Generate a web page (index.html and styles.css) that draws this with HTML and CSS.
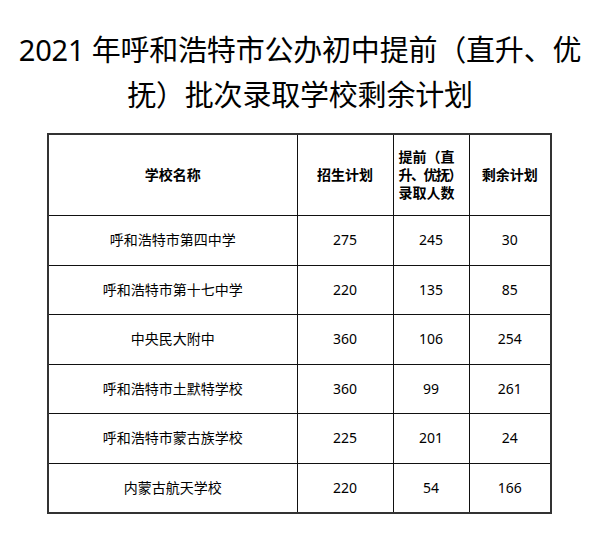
FILE: index.html
```html
<!DOCTYPE html>
<html lang="zh-CN">
<head>
<meta charset="utf-8">
<link rel="stylesheet" href="styles.css">
</head>
<body>
<h1 class="title">2021 年呼和浩特市公办初中提前（直升、优<br>抚）批次录取学校剩余计划</h1>
<table class="plan">
  <colgroup>
    <col class="c-name"><col class="c-plan"><col class="c-adm"><col class="c-rest">
  </colgroup>
  <thead>
    <tr>
      <th>学校名称</th>
      <th>招生计划</th>
      <th class="narrow">提前（直<br><span class="tight">升、优抚）</span><br>录取人数</th>
      <th>剩余计划</th>
    </tr>
  </thead>
  <tbody>
    <tr><td>呼和浩特市第四中学</td><td>275</td><td>245</td><td>30</td></tr>
    <tr><td>呼和浩特市第十七中学</td><td>220</td><td>135</td><td>85</td></tr>
    <tr><td>中央民大附中</td><td>360</td><td>106</td><td>254</td></tr>
    <tr><td>呼和浩特市土默特学校</td><td>360</td><td>99</td><td>261</td></tr>
    <tr><td>呼和浩特市蒙古族学校</td><td>225</td><td>201</td><td>24</td></tr>
    <tr><td>内蒙古航天学校</td><td>220</td><td>54</td><td>166</td></tr>
  </tbody>
</table>
</body>
</html>
```
FILE: styles.css
```css
html, body {
  margin: 0;
  padding: 0;
  background: #fff;
  color: #000;
}
body {
  font-family: "Noto Sans", "Noto Sans CJK SC", sans-serif;
}
.title {
  margin: 27px 0 0;
  font-size: 29px;
  line-height: 45px;
  font-weight: 400;
  text-align: center;
  letter-spacing: -0.2px;
}
.plan {
  margin: 16px 0 0 47px;
  width: 503px;
  border-collapse: collapse;
  table-layout: fixed;
  border: 2px solid #333;
}
.c-name { width: 249px; }
.c-plan { width: 96px; }
.c-adm { width: 76px; }
.c-rest { width: 82px; }
.plan th, .plan td {
  border: 1px solid #111;
  text-align: center;
  vertical-align: middle;
  font-size: 14px;
  padding: 0 2px;
}
.plan th {
  height: 80px;
  font-weight: 700;
  line-height: 18px;
}
.plan td {
  height: 48.5px;
  line-height: 18px;
}
.plan th.narrow {
  text-align: left;
  padding-left: 5px;
  padding-right: 0;
  white-space: nowrap;
}
.tight {
  letter-spacing: -1.5px;
}
```
